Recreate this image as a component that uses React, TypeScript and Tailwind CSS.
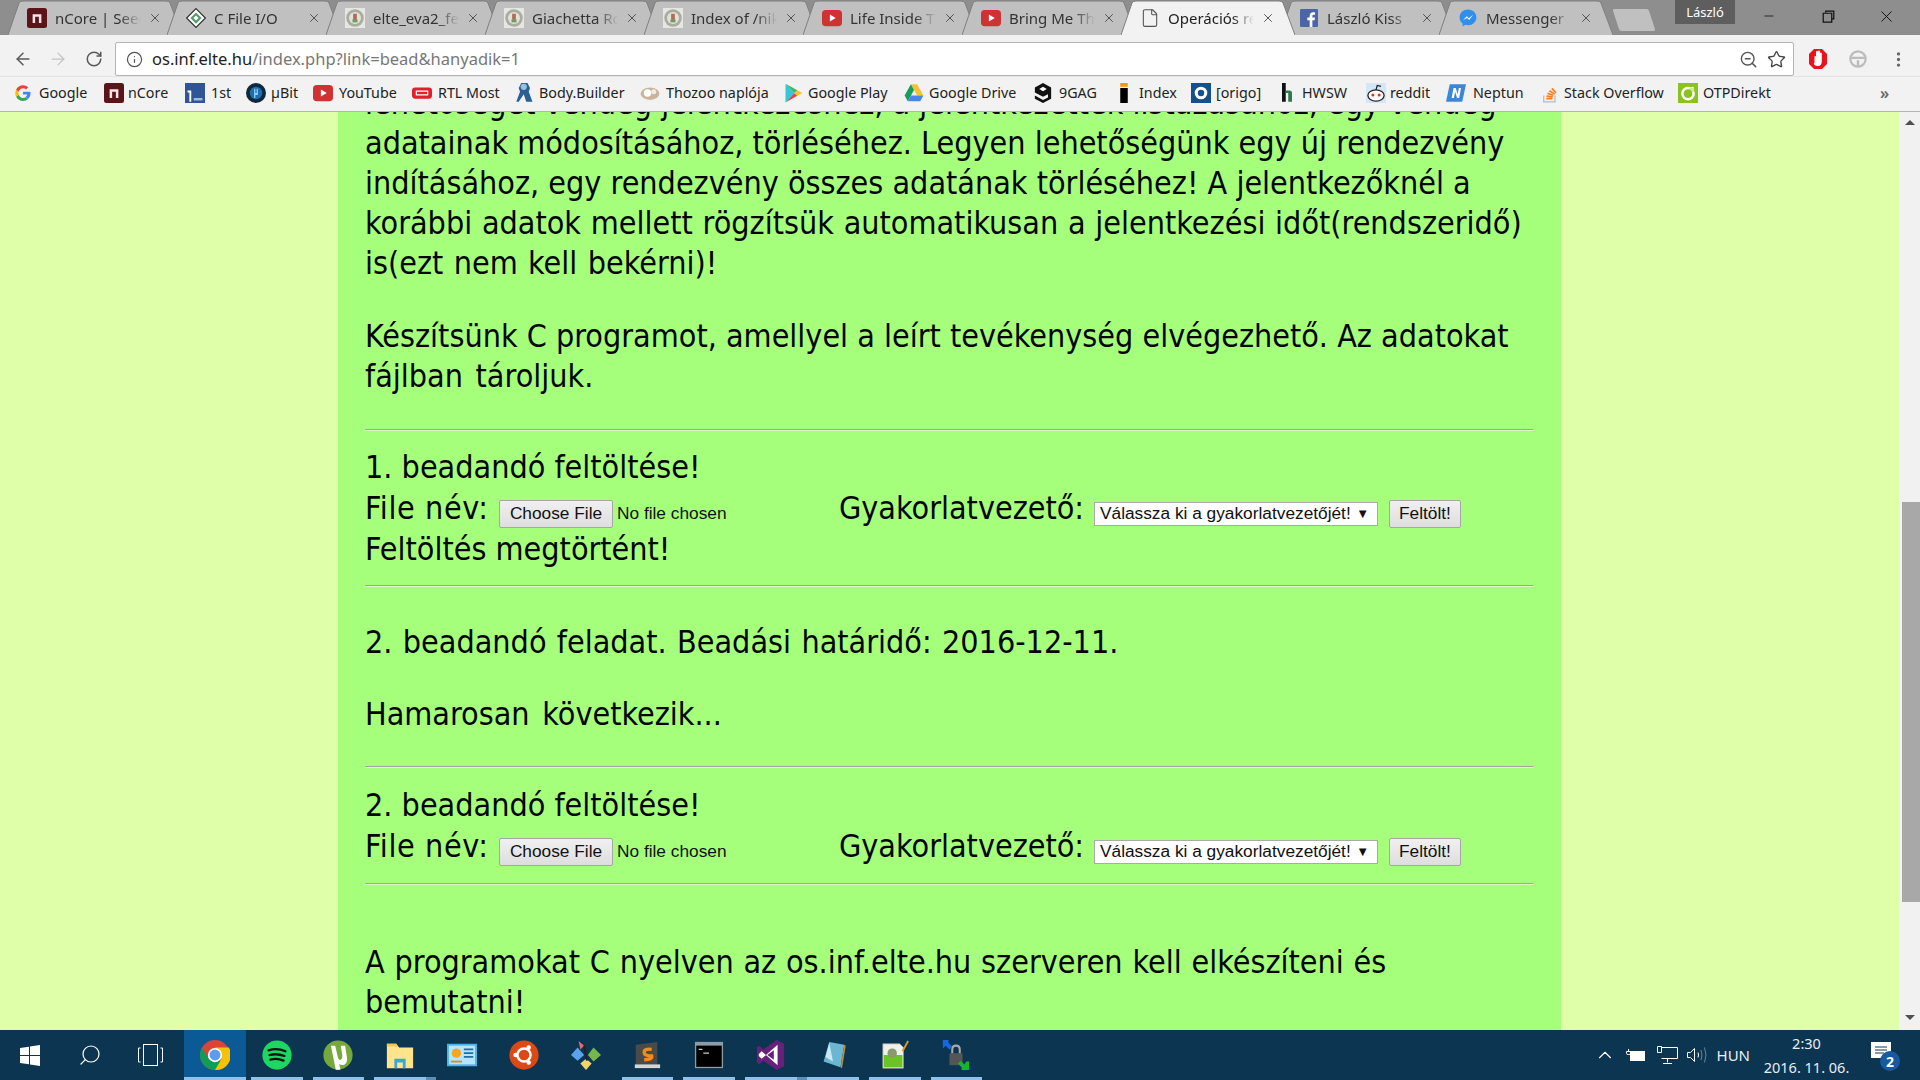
import { ArrowLeft, ArrowRight, ChevronUp, EllipsisVertical, File, Info, Minus, RotateCw, Search, Star, X, ZoomOut } from "lucide-react";
import type { ReactNode } from "react";

const uiFont = "font-['Noto_Sans',sans-serif]";
const pageFont = "font-['DejaVu_Sans_Condensed','DejaVu_Sans',sans-serif]";
const formFont = "font-['Liberation_Sans',Arial,sans-serif]";

function Svg({ size = 16, children, className = "" }: { size?: number; children: ReactNode; className?: string }) {
  return (
    <svg width={size} height={size} viewBox="0 0 16 16" className={`shrink-0 ${className}`}>
      {children}
    </svg>
  );
}

const NCore = ({ size = 20 }: { size?: number }) => (
  <Svg size={size}>
    <rect width="16" height="16" rx="2" fill="#5d1418" />
    <path d="M4.500 12V5h7v7h-2V7h-3v5z" fill="#f2e6e6" />
  </Svg>
);
const CFile = () => (
  <Svg size={20}>
    <path d="M8 .5 15.500 8 8 15.500.5 8z" fill="#fff" stroke="#333" />
    <path d="M8 3.500 12.500 8 8 12.500 3.500 8z" fill="#5a9a70" />
    <path d="M8 6l2 2-2 2-2-2z" fill="#fff" />
  </Svg>
);
const Elte = () => (
  <Svg size={20}>
    <rect width="16" height="16" fill="#e6e6e2" />
    <circle cx="8" cy="8" r="7" fill="#a8ad9e" />
    <circle cx="8" cy="8" r="4.800" fill="#e4e2d8" />
    <path d="M6.500 4.500h3v4L8 10.500l-1.500-2z" fill="#b7695f" />
    <path d="M6 9h4v2.500H6z" fill="#6f9a62" />
  </Svg>
);
const YouTube = ({ size = 20 }: { size?: number }) => (
  <Svg size={size}>
    <rect y="1.500" width="16" height="13" rx="3" fill="#cd3333" />
    <path d="M6.300 5.200 11 8l-4.700 2.800z" fill="#fff" />
  </Svg>
);
const Facebook = () => (
  <Svg size={18}>
    <rect width="16" height="16" rx="1" fill="#4a66a8" />
    <path d="M11 16v-6h2l.3-2.400H11V6.200c0-.7.3-1.100 1.200-1.100h1.200V3c-.5-.1-1.200-.1-1.800-.1-1.800 0-3 1.100-3 3.100v1.600H6.500V10h2.100v6z" fill="#fff" />
  </Svg>
);
const Messenger = () => (
  <Svg size={18}>
    <path d="M8 .5C3.800.5.500 3.600.500 7.500c0 2.200 1 4.100 2.700 5.400v2.600l2.500-1.400c.7.200 1.500.3 2.300.3 4.200 0 7.500-3.100 7.500-6.900S12.200.500 8 .500z" fill="#2f8fee" />
    <path d="m3.500 10 3.400-3.600 1.800 1.800L12.500 5 9.100 9.700 7.200 7.900z" fill="#fff" />
  </Svg>
);
const GoogleG = () => (
  <Svg>
    <path d="M15.500 8.200c0-.6-.1-1-.2-1.500H8v2.900h4.200c-.2 1-.7 1.800-1.600 2.400l2.500 1.900c1.500-1.300 2.400-3.300 2.400-5.700z" fill="#4285f4" />
    <path d="M8 16c2.100 0 3.900-.7 5.100-1.900l-2.500-1.900c-.7.500-1.500.7-2.600.7-2 0-3.700-1.300-4.300-3.200L1.100 11.700C2.400 14.300 5 16 8 16z" fill="#34a853" />
    <path d="M3.700 9.700a4.800 4.800 0 0 1 0-3L1.100 4.700a8 8 0 0 0 0 7z" fill="#fbbc05" />
    <path d="M8 3.200c1.200 0 2.200.4 3 1.200l2.200-2.200C11.900.9 10.100.200 8 .200 5 .2 2.400 1.900 1.100 4.700l2.600 2C4.300 4.600 6 3.200 8 3.200z" fill="#ea4335" />
  </Svg>
);

const bookmarks: { w: string; icon: ReactNode; gap: string; label: string }[] = [
  { w: "w-[89px]", gap: "gap-[8px]", label: "Google", icon: <GoogleG /> },
  { w: "w-[81px]", gap: "gap-[4px]", label: "nCore", icon: <NCore /> },
  {
    w: "w-[61px]", gap: "gap-[6px]", label: "1st",
    icon: <Svg size={20}><rect width="16" height="16" fill="#2f5597" /><path d="M2 6h3v9H3.500V7.500H2z" fill="#fff" /><path d="M7 12h7v2H7z" fill="#9db7e0" /></Svg>,
  },
  {
    w: "w-[67px]", gap: "gap-[5px]", label: "µBit",
    icon: <Svg size={20}><circle cx="8" cy="8" r="8" fill="#10283c" /><circle cx="8" cy="8" r="5" fill="#1f6fb0" /><path d="M6.500 4.500h1V8h1V4.500h1v5h-2v2.500h-1z" fill="#8fd0f5" /></Svg>,
  },
  { w: "w-[99px]", gap: "gap-[6px]", label: "YouTube", icon: <YouTube /> },
  {
    w: "w-[103px]", gap: "gap-[6px]", label: "RTL Most",
    icon: <Svg size={20}><rect y="3.500" width="16" height="9" rx="2.500" fill="#e0202a" /><path d="M3 6h10v4H3z" fill="#fff" /><path d="M4 7h8v2H4z" fill="#e0202a" /></Svg>,
  },
  {
    w: "w-[125px]", gap: "gap-[4px]", label: "Body.Builder",
    icon: <Svg size={20}><path d="M5 0h5l2 4-1 3 3 8H9L7 9 3 15H1l3-8-1-3z" fill="#2c5f95" /><circle cx="7" cy="3" r="2.500" fill="#9bbfdf" /></Svg>,
  },
  {
    w: "w-[143px]", gap: "gap-[6px]", label: "Thozoo naplója",
    icon: <Svg size={20}><ellipse cx="8" cy="8.500" rx="7.500" ry="5" fill="#c9b39b" /><circle cx="6" cy="8" r="3" fill="#fff" /><circle cx="11" cy="7" r="2" fill="#f3ece2" /></Svg>,
  },
  {
    w: "w-[121px]", gap: "gap-[5px]", label: "Google Play",
    icon: <Svg size={20}><path d="M2 .5v15L9 8z" fill="#39c5d8" /><path d="M2 .5 11.500 5.800 9 8z" fill="#3bb96b" /><path d="M2 15.500 11.500 10.200 9 8z" fill="#e8424d" /><path d="M11.500 5.800 15.500 8l-4 2.200L9 8z" fill="#fbc02d" /></Svg>,
  },
  {
    w: "w-[129px]", gap: "gap-[5px]", label: "Google Drive",
    icon: <Svg size={20}><path d="M5.500 1h5l5 9h-5z" fill="#f6c32c" /><path d="M5.500 1 .500 10l2.500 4.500 5-9z" fill="#179c5b" /><path d="M5.500 10h10L13 14.500H3z" fill="#4a86e8" /></Svg>,
  },
  {
    w: "w-[81px]", gap: "gap-[6px]", label: "9GAG",
    icon: <Svg size={20}><path d="M8 0l6.500 3.500v9L8 16l-6.500-3.500V10l6.500 3.500 4-2V9L8 11 1.500 7.500v-4z" fill="#111" /><path d="M8 3 5 4.800 8 6.500l3-1.700z" fill="#fff" /></Svg>,
  },
  {
    w: "w-[77px]", gap: "gap-[5px]", label: "Index",
    icon: <Svg size={20}><rect x="5" y="0" width="6" height="3" fill="#f59a00" /><rect x="5" y="4" width="6" height="12" fill="#000" /></Svg>,
  },
  {
    w: "w-[86px]", gap: "gap-[5px]", label: "[origo]",
    icon: <Svg size={20}><rect width="16" height="16" fill="#13508f" /><circle cx="8" cy="8" r="3.800" fill="none" stroke="#fff" strokeWidth="2.500" /></Svg>,
  },
  {
    w: "w-[89px]", gap: "gap-[5px]", label: "HWSW",
    icon: <Svg size={20}><path d="M4 0h3v15H4z" fill="#111" /><path d="M7 6h3q2 0 2 2v7H9V8H7z" fill="#2d7a50" /></Svg>,
  },
  {
    w: "w-[80px]", gap: "gap-[4px]", label: "reddit",
    icon: <Svg size={20}><rect width="16" height="16" fill="#d5e6f7" /><ellipse cx="8" cy="10" rx="6.500" ry="4.500" fill="#fff" stroke="#222" /><circle cx="5.500" cy="9.500" r="1.200" fill="#e0301e" /><circle cx="10.500" cy="9.500" r="1.200" fill="#e0301e" /><path d="M8 5.500 9 2l3 .7" fill="none" stroke="#222" /></Svg>,
  },
  {
    w: "w-[94px]", gap: "gap-[7px]", label: "Neptun",
    icon: <Svg size={20}><path d="M3 1h13l-3 14H0z" fill="#3c86d8" /><path d="M4.500 12 6 4h1.800l1.500 5 1-5H12l-1.500 8H8.800L7.300 7l-1 5z" fill="#fff" /></Svg>,
  },
  {
    w: "w-[138px]", gap: "gap-[4px]", label: "Stack Overflow",
    icon: <Svg size={20}><path d="M3 10v5h9v-5" fill="none" stroke="#b9b9b9" /><path d="M5 12.500h5M5.200 10.500l5 .6M6 8.300l4.700 1.500M7.500 6.200l4.300 2.700M9.500 4.300l3.300 3.600" stroke="#f48024" strokeWidth="1.300" /></Svg>,
  },
  {
    w: "w-[100px]", gap: "gap-[5px]", label: "OTPDirekt",
    icon: <Svg size={20}><rect width="16" height="16" fill="#8cc21f" /><circle cx="8" cy="8.500" r="4.500" fill="none" stroke="#fff" strokeWidth="2" /><circle cx="11.500" cy="4.500" r="1.500" fill="#fff" /><path d="M9 4h5v3H9z" fill="#8cc21f" fillOpacity=".4" /></Svg>,
  },
];

const tabs: { title: string; icon: ReactNode; active?: boolean }[] = [
  { title: "nCore | Seedbox", icon: <NCore /> },
  { title: "C File I/O", icon: <CFile /> },
  { title: "elte_eva2_fele", icon: <Elte /> },
  { title: "Giachetta Roberto", icon: <Elte /> },
  { title: "Index of /nik/", icon: <Elte /> },
  { title: "Life Inside The", icon: <YouTube /> },
  { title: "Bring Me The", icon: <YouTube /> },
  { title: "Operációs rendszerek", icon: <File size={20} strokeWidth={1.300} className="text-[#555]" />, active: true },
  { title: "László Kiss", icon: <Facebook /> },
  { title: "Messenger", icon: <Messenger /> },
];

function Tab({ title, icon, active }: { title: string; icon: ReactNode; active?: boolean }) {
  return (
    <div className={`relative -mr-[15px] flex h-[35px] w-[174px] shrink-0 items-center pl-[19px] pr-[16px] ${active ? "z-10" : ""}`}>
      <svg viewBox="0 0 174 35" preserveAspectRatio="none" className="absolute inset-0 h-full w-full">
        <path d="M0 35 11 3Q12 1 15 1H158Q161 1 162 3L174 35" fill={active ? "#f2f2f2" : "#c0c0c0"} stroke="#7f7f7f" />
      </svg>
      <div className="relative flex w-[20px] shrink-0 justify-center">{icon}</div>
      <span className={`relative ml-[8px] mt-[2px] w-[86px] overflow-hidden whitespace-nowrap text-[15px] [mask-image:linear-gradient(to_right,#000_75%,transparent)] ${active ? "text-[#222]" : "text-[#333]"}`}>
        {title}
      </span>
      <X size={14} strokeWidth={1.500} className="relative ml-auto mr-[4px] mt-[1px] text-[#444]" />
    </div>
  );
}

function Rule() {
  return <div className="h-[2px] border-t border-b border-t-[#a3a3a3] border-b-[#dff5cf]" />;
}

function UploadRow() {
  return (
    <div className="flex h-[42px] items-center">
      <div className="flex w-[475px] items-center">
        <span className="w-[134px] tracking-[0.6px]">File név:</span>
        <FormButton w="w-[114px]">Choose File</FormButton>
        <span className={`ml-[4px] mt-[12px] text-[17.300px] leading-normal text-[#111] ${formFont}`}>No file chosen</span>
      </div>
      <span className="-ml-[1px] w-[255px]">Gyakorlatvezető:</span>
      <div className={`mt-[11px] flex h-[24px] w-[284px] items-center justify-between border border-[#aaa] bg-white pl-[5px] pr-[8px] text-[17.300px] leading-normal text-[#111] ${formFont}`}>
        <span>Válassza ki a gyakorlatvezetőjét!</span>
        <span className="text-[13px]">▼</span>
      </div>
      <div className="ml-[11px] flex">
        <FormButton w="w-[72px]">Feltölt!</FormButton>
      </div>
    </div>
  );
}

function FormButton({ w, children }: { w: string; children: ReactNode }) {
  return (
    <button className={`mt-[12px] h-[28px] ${w} rounded-[2px] border border-[#a6a6a6] bg-gradient-to-b from-[#f0f0f0] to-[#dedede] text-[17.300px] leading-normal text-[#111] ${formFont}`}>
      {children}
    </button>
  );
}

const taskbarApps: { icon: ReactNode; open?: boolean; stacked?: boolean; active?: boolean }[] = [
  {
    active: true, open: true,
    icon: <Svg size={30}><circle cx="8" cy="8" r="8" fill="#db4437" /><path d="M8 8 1.100 12A8 8 0 0 0 8 16l3.500-4z" fill="#0f9d58" /><path d="M8 4h7.400A8 8 0 0 1 8 16l3.500-6z" fill="#f4c20d" /><path d="M1.100 4 4.500 10 1.100 12A8 8 0 0 1 1.100 4z" fill="#0f9d58" /><circle cx="8" cy="8" r="3.800" fill="#fff" /><circle cx="8" cy="8" r="2.900" fill="#5c9bf0" /></Svg>,
  },
  {
    open: true,
    icon: <Svg size={30}><circle cx="8" cy="8" r="7.800" fill="#1ed760" /><path d="M3.500 5.500Q8 4 12.500 6M4 8Q8 7 12 8.500M4.500 10.500Q8 9.500 11.500 11" fill="none" stroke="#111" strokeWidth="1.200" strokeLinecap="round" /></Svg>,
  },
  {
    open: true,
    icon: <Svg size={30}><circle cx="8" cy="8" r="7.800" fill="#76a83b" /><path d="M6.500 3 8 9.500q.5 1.500 1.500 1 1-.5.8-2L9.500 3h2.300l1 6.500q.3 2.500-1.200 3.500-1.500.8-3-.2l.7 3H6.800L4.200 3z" fill="#fff" /></Svg>,
  },
  {
    open: true, stacked: true,
    icon: <Svg size={30}><path d="M1 2h5l1.500 2H15v11H1z" fill="#ffe48b" /><path d="M1 2h5l.8 1.500H1z" fill="#f2c94c" /><path d="M5 15v-5h6v5H9.500v-3h-3v3z" fill="#3aa5e0" /></Svg>,
  },
  {
    icon: <Svg size={30}><rect y="2" width="16" height="12" fill="#45b4ea" /><rect x="1" y="3" width="14" height="10" fill="#b8e4fa" /><circle cx="5" cy="7" r="2.500" fill="#f5a623" /><path d="M9 5h5M9 7h5M9 9h5" stroke="#1b6fa8" /><path d="M2 11.500h6" stroke="#e08a1e" /></Svg>,
  },
  {
    icon: <Svg size={30}><circle cx="8" cy="8" r="7.800" fill="#dd4814" /><circle cx="8" cy="8" r="3.500" fill="none" stroke="#fff" strokeWidth="1.300" /><circle cx="3.500" cy="8" r="1.200" fill="#fff" /><circle cx="10.500" cy="4" r="1.200" fill="#fff" /><circle cx="10.500" cy="12" r="1.200" fill="#fff" /></Svg>,
  },
  {
    icon: <Svg size={30}><path d="M4 .5 7 3 5 5z" fill="#e46a72" /><path d="M3.500 4 7 8l-3.500 3L0 8z" fill="#5aa2ef" /><path d="M12 4l4 4-4 3.500L9 8z" fill="#76b84a" /><path d="M8 10l3 2.500L8 16l-3-3.500z" fill="#f2d46b" /><path d="M7 3l1.500 8" stroke="#222" strokeWidth="1" /></Svg>,
  },
  {
    open: true,
    icon: <Svg size={30}><path d="M2 2.500 13.500 1v12H2z" fill="#4a4a4a" /><path d="M1.500 13H15v2H1.500z" fill="#d6d6d6" /><path d="M10.500 5Q6.500 4.500 6.500 6.500t4 2q.5 2-4 2" fill="none" stroke="#f58a1f" strokeWidth="1.800" /></Svg>,
  },
  {
    open: true,
    icon: <Svg size={30}><rect x=".5" y="1" width="15" height="14" fill="#8f9aa5" /><rect x="1.200" y="3" width="13.600" height="11.300" fill="#000" /><path d="M2.500 5h2M5 7h3" stroke="#ccc" strokeWidth=".6" /></Svg>,
  },
  {
    open: true, stacked: true,
    icon: <Svg size={30}><path d="M11 0l4 2v12l-4 2-7-5-2.500 2L.5 12V4l1-1L4 5z" fill="#68217a" /><path d="M11 3.500v9L5 8z" fill="#68217a" /><path d="M11.500 2.500v11L3 6 1.500 7.500v1L3 10z" fill="#fff" /><path d="M9.500 5.500v5L6 8z" fill="#68217a" /></Svg>,
  },
  {
    open: true,
    icon: <Svg size={30}><path d="M6 1l8 1.500-2 12-9-3z" fill="#6bb6d2" /><path d="M4 9 6 1.500l2 10z" fill="#c9e8f3" /><path d="M14 2.500l.8.600-2 12-.8-.600z" fill="#c68a2e" /></Svg>,
  },
  {
    open: true,
    icon: <Svg size={30}><path d="M1.500 2h9l2 2v11h-11z" fill="#eef2e8" stroke="#999" strokeWidth=".4" /><path d="M2 8h10v6.500H2z" fill="#6cc324" /><circle cx="6.500" cy="7" r="2.500" fill="#8a9a6b" /><path d="M12 6 15 .5" stroke="#d89a2a" strokeWidth="1" /></Svg>,
  },
  {
    open: true,
    icon: <Svg size={30}><rect x="4.500" y="7" width="7" height="6.500" rx=".5" fill="#555" /><path d="M6 7V5q0-2 2-2t2 2v2" fill="none" stroke="#aaa" strokeWidth="1.100" /><path d="M1 0h3v1.500L6 3.500 4.500 5 2.500 3 1 4.500z" fill="#1468e0" /><path d="M15 16h-4v-1.500l-2-2L10.500 11l2 2 1-1.500H15z" fill="#18b52c" /></Svg>,
  },
];

export default function App() {
  return (
    <div className={`flex h-screen w-full flex-col overflow-hidden ${uiFont}`}>
      {/* Tab strip */}
      <div className="flex h-[35px] shrink-0 bg-[#8e8e8e] pl-[8px]">
        {tabs.map((tab) => (
          <Tab key={tab.title} {...tab} />
        ))}
        <div className="ml-[18px] mt-[9px] h-[22px] w-[36px] skew-x-[18deg] rounded-[2px] bg-[#c0c0c0]" />
        <div className="ml-auto flex items-start">
          <div className="flex h-[24px] w-[60px] items-center justify-center bg-[#5e5e5e] text-[13px] leading-none text-white">László</div>
          <div className="flex h-[35px] w-[185px] items-center pb-[3px] pl-[4px] text-[#111]">
            <div className="flex w-[60px] justify-center"><Minus size={14} strokeWidth={1.400} /></div>
            <div className="flex w-[58px] justify-center">
              <Svg size={13}><path d="M4.500 3V1.500h10V11H12M1.500 4h10.500v11H1.500z" fill="none" stroke="#111" strokeWidth="1.500" /></Svg>
            </div>
            <div className="flex w-[58px] justify-center"><X size={19} strokeWidth={1.200} /></div>
          </div>
        </div>
      </div>

      {/* Address bar */}
      <div className="flex h-[41px] shrink-0 items-center bg-[#f2f2f2] pl-[13px] pt-[7px]">
        <ArrowLeft size={20} strokeWidth={1.800} className="text-[#5a5a5a]" />
        <ArrowRight size={20} strokeWidth={1.500} className="ml-[15px] text-[#c4c4c4]" />
        <RotateCw size={18} strokeWidth={2} className="ml-[17px] text-[#5a5a5a]" />
        <div className="ml-[12px] flex h-[34px] w-[1679px] items-center rounded-[2px] border border-[#b5b5b5] bg-white pl-[10px] pr-[7px]">
          <Info size={17} strokeWidth={1.700} className="text-[#555]" />
          <span className="ml-[9px] text-[16.500px] leading-none text-[#222]">
            os.inf.elte.hu<span className="text-[#777]">/index.php?link=bead&amp;hanyadik=1</span>
          </span>
          <ZoomOut size={19} strokeWidth={1.800} className="ml-auto text-[#555]" />
          <Star size={19} strokeWidth={1.700} className="ml-[9px] text-[#444]" />
        </div>
        <svg width="20" height="22" viewBox="0 0 20 22" className="ml-[14px] shrink-0">
          <path d="M6 1h8l5 5v10l-5 5H6l-5-5V6z" fill="#e8141c" />
          <path d="M6.500 15V8.500a1 1 0 0 1 1.500 0V4a1 1 0 0 1 2 0V8V3.500a1 1 0 0 1 2 0V9V5a1 1 0 0 1 1.800 0v8q0 5-4 5t-4-3z" fill="#fff" />
        </svg>
        <Svg size={18} className="ml-[21px]">
          <circle cx="8" cy="8" r="6.800" fill="none" stroke="#bcbcbc" strokeWidth="2" />
          <path d="M1.500 7h13M8 9v5" stroke="#bcbcbc" strokeWidth="2.200" />
        </Svg>
        <EllipsisVertical size={19} strokeWidth={2.200} className="ml-[22px] text-[#666]" />
      </div>

      {/* Bookmarks bar */}
      <div className="flex h-[36px] shrink-0 items-center border-t border-b border-t-[#e4e4e4] border-b-[#b4b4b4] bg-[#f2f2f2] pb-[2px] pl-[15px] text-[14.300px] leading-none text-[#222]">
        {bookmarks.map((b) => (
          <div key={b.label} className={`flex shrink-0 items-center ${b.w} ${b.gap}`}>
            {b.icon}
            <span className="whitespace-nowrap">{b.label}</span>
          </div>
        ))}
        <span className="ml-[102px] text-[16px] font-semibold text-[#666]">»</span>
      </div>

      {/* Page */}
      <div className="flex min-h-0 flex-1">
        <div className="min-w-0 flex-1 overflow-hidden bg-[#e0ffa9] pl-[338px]">
          <div className={`-mt-[29px] w-[1223px] bg-[#a6ff7a] pb-[60px] pl-[27px] pr-[28px] text-[32px] leading-[40px] text-[#050505] ${pageFont}`}>
            <div className="whitespace-nowrap">
              <div>lehetőséget vendég jelentkezéshez, a jelentkezettek listázásához, egy vendég</div>
              <div>adatainak módosításához, törléséhez. Legyen lehetőségünk egy új rendezvény</div>
              <div>indításához, egy rendezvény összes adatának törléséhez! A jelentkezőknél a</div>
              <div className="[word-spacing:0.6px]">korábbi adatok mellett rögzítsük automatikusan a jelentkezési időt(rendszeridő)</div>
              <div className="[word-spacing:1.200px]">is(ezt nem kell bekérni)!</div>
            </div>
            <div className="mt-[33px] whitespace-nowrap">
              <div>Készítsünk C programot, amellyel a leírt tevékenység elvégezhető. Az adatokat</div>
              <div className="[word-spacing:3.500px]">fájlban tároljuk.</div>
            </div>
            <div className="mt-[33px]"><Rule /></div>
            <div className="mt-[16px]">1. beadandó feltöltése!</div>
            <UploadRow />
            <div>Feltöltés megtörtént!</div>
            <div className="mt-[16px]"><Rule /></div>
            <div className="mt-[35px] [word-spacing:1.200px]">2. beadandó feladat. Beadási határidő: 2016-12-11.</div>
            <div className="mt-[32px] [word-spacing:3.500px]">Hamarosan következik...</div>
            <div className="mt-[32px]"><Rule /></div>
            <div className="mt-[17px]">2. beadandó feltöltése!</div>
            <UploadRow />
            <div className="mt-[16px]"><Rule /></div>
            <div className="mt-[57px] whitespace-nowrap">
              <div className="[word-spacing:0.660px]">A programokat C nyelven az os.inf.elte.hu szerveren kell elkészíteni és</div>
              <div>bemutatni!</div>
            </div>
          </div>
        </div>

        {/* Scrollbar */}
        <div className="flex w-[21px] shrink-0 flex-col items-center bg-[#f1f1f1] pt-[8px]">
          <div className="h-0 w-0 border-x-[5px] border-b-[5px] border-x-transparent border-b-[#505050]" />
          <div className="ml-[3px] mt-[377px] h-[400px] w-[18px] bg-[#a8a8a8]" />
          <div className="mt-[113px] h-0 w-0 border-x-[5px] border-t-[5px] border-x-transparent border-t-[#505050]" />
        </div>
      </div>

      {/* Taskbar */}
      <div className={`flex h-[50px] shrink-0 items-stretch bg-[#0c3552] text-white ${uiFont}`}>
        <div className="flex w-[60px] items-center justify-center">
          <svg width="20" height="21" viewBox="0 0 20 21">
            <path d="M0 3l9-1.300V10H0zM10 1.500 20 0v10H10zM0 11h9v8.300L0 18zM10 11h10v10l-10-1.500z" fill="#fff" />
          </svg>
        </div>
        <div className="flex w-[60px] items-center justify-center">
          <Search size={24} strokeWidth={1.200} className="-scale-x-100" />
        </div>
        <div className="mr-[4px] flex w-[60px] items-center justify-center">
          <svg width="25" height="23" viewBox="0 0 25 23" fill="none" stroke="#fff">
            <rect x="5.500" y=".5" width="14" height="21" />
            <path d="M2.500 4H.5v14h2M22.500 4h2v14h-2" />
          </svg>
        </div>
        {taskbarApps.map((app, i) => (
          <div key={i} className={`relative flex w-[61.800px] items-center justify-center ${app.active ? "bg-[#0b5a96]" : ""}`}>
            {app.icon}
            {app.open && (
              <div className={`absolute bottom-0 flex h-[3px] ${app.active ? "inset-x-0" : "inset-x-[5px]"} bg-[#8fc1ea]`}>
                {app.stacked && <div className="absolute -right-[10px] h-full w-[10px] bg-[#5b8fb5]" />}
              </div>
            )}
          </div>
        ))}

        {/* Tray */}
        <div className="ml-auto flex items-center">
          <ChevronUp size={22} strokeWidth={1.200} className="mr-[10px]" />
          <svg width="20" height="14" viewBox="0 0 20 14" fill="none" stroke="#fff" className="mr-[11px]">
            <rect x="4.500" y="3.500" width="14" height="9" fill="#fff" />
            <path d="M2.500 4V1M.5 3.500h4v2q0 1-2 1t-2-1z" />
          </svg>
          <svg width="21" height="20" viewBox="0 0 21 20" fill="none" stroke="#fff" className="mr-[9px]">
            <path d="M4.500 2.500h16v11h-16M10.500 13.500v4M6 18.500h9M.5 1.500h4v6h-4z" />
          </svg>
          <svg width="21" height="16" viewBox="0 0 21 16" fill="none" stroke="#fff" className="mr-[9px]">
            <path d="M.5 5.500h3l4-4v13l-4-4h-3z" />
            <path d="M11 5.500q1 2.500 0 5" />
            <path d="M14 3q2 5 0 10M17.500 .5q3 7.500 0 15" stroke="#6a8598" />
          </svg>
          <span className="mr-[14px] text-[15px] text-[#e8eef2]">HUN</span>
          <div className="mr-[22px] flex w-[85px] flex-col items-center text-[14.500px] leading-[24px] text-[#e8eef2]">
            <span>2:30</span>
            <span className="whitespace-nowrap">2016. 11. 06.</span>
          </div>
          <div className="relative mr-[29px] h-[26px] w-[20px]">
            <svg width="20" height="20" viewBox="0 0 20 20">
              <path d="M0 0h20v16h-7l-3 3v-3H0z" fill="#fff" />
              <path d="M4 5h12M4 8h12M4 11h9" stroke="#0c3552" />
            </svg>
            <div className="absolute -right-[9px] top-[9px] flex h-[20px] w-[20px] items-center justify-center rounded-full bg-[#195a9e] text-[14px] font-bold">2</div>
          </div>
        </div>
      </div>
    </div>
  );
}
